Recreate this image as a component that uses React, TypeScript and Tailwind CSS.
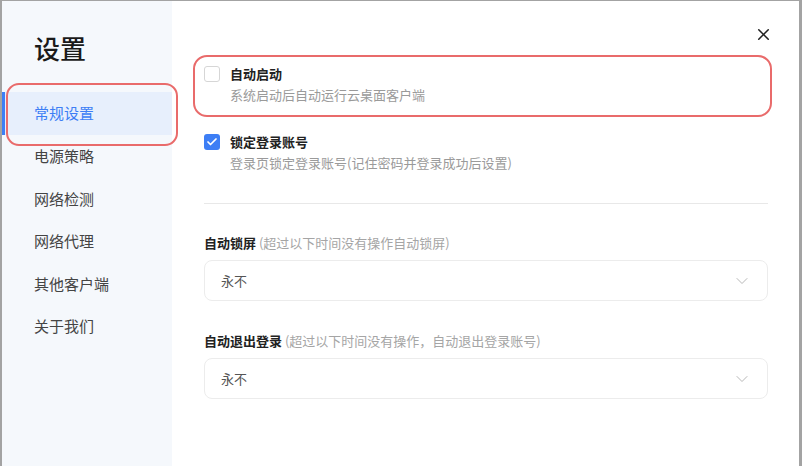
import { X, ChevronDown, Check } from 'lucide-react'

const menu = ['常规设置', '电源策略', '网络检测', '网络代理', '其他客户端', '关于我们']

function Select({ value }: { value: string }) {
  return (
    <div className="mt-[7px] flex h-[41px] items-center justify-between rounded-lg border border-[#ececec] bg-white pl-4 pr-[15px]">
      <span className="text-[13px] text-[#555]">{value}</span>
      <ChevronDown className="h-5 w-5 text-[#b0b0b0]" strokeWidth={1.1} />
    </div>
  )
}

export default function App() {
  return (
    <div
      className="flex h-[466px] w-[802px] border-l-2 border-r-[3px] border-t border-[#a3a3a3] bg-white"
      style={{ fontFamily: '"Noto Sans CJK SC", "Noto Sans", sans-serif' }}
    >
      {/* sidebar */}
      <aside className="w-[170px] shrink-0 bg-[#f5f8fc] pt-[29px]">
        <h1 className="pl-8 text-[26px] font-medium leading-[36px] text-[#1a1a1a]">设置</h1>
        <ul className="mt-[26px]">
          {menu.map((m, i) => (
            <li
              key={m}
              className={
                i === 0
                  ? 'relative flex h-[43px] items-center border-l-[3px] border-[#3d7ef5] bg-[#e7effc] pl-[29px] text-[15px] text-[#3d7ef5]'
                  : 'flex h-[42.5px] items-center pl-8 text-[15px] text-[#444]'
              }
            >
              {m}
              {i === 0 && (
                <span className="pointer-events-none absolute -bottom-[11px] -right-[6px] -top-[9px] left-[1px] rounded-[13px] border-2 border-[#e96b6b]" />
              )}
            </li>
          ))}
        </ul>
      </aside>

      {/* content */}
      <main className="relative flex-1 pl-8 pr-[31px] pt-[63px]">
        <button className="absolute right-[26px] top-[24px] text-[#222]">
          <X className="h-[19px] w-[19px]" strokeWidth={2} />
        </button>

        <div className="relative flex gap-[10px]">
          <span className="mt-[2px] h-4 w-4 shrink-0 rounded-[3px] border border-[#d6d6d6] bg-white" />
          <div>
            <p className="text-[13px] font-semibold leading-5 text-[#222]">自动启动</p>
            <p className="mt-[1px] text-[13px] leading-5 text-[#9a9a9a]">系统启动后自动运行云桌面客户端</p>
          </div>
          <span className="pointer-events-none absolute -left-[11px] -right-[4px] -top-[9px] -bottom-[12px] rounded-[14px] border-2 border-[#e96b6b]" />
        </div>

        <div className="mt-[27px] flex gap-[10px]">
          <span className="mt-[2px] flex h-4 w-4 shrink-0 items-center justify-center rounded-[3px] bg-[#3d7ef5]">
            <Check className="h-3 w-3 text-white" strokeWidth={3.5} />
          </span>
          <div>
            <p className="text-[13px] font-semibold leading-5 text-[#222]">锁定登录账号</p>
            <p className="mt-[1px] text-[13px] leading-5 text-[#9a9a9a]">登录页锁定登录账号(记住密码并登录成功后设置)</p>
          </div>
        </div>

        <div className="mt-[30px] h-px bg-[#e8e8e8]" />

        <p className="mt-[29px] text-[13px] leading-5">
          <span className="font-semibold text-[#222]">自动锁屏</span>
          <span className="text-[#a5a5a5]"> (超过以下时间没有操作自动锁屏)</span>
        </p>
        <Select value="永不" />

        <p className="mt-[30px] text-[13px] leading-5">
          <span className="font-semibold text-[#222]">自动退出登录</span>
          <span className="text-[#a5a5a5]"> (超过以下时间没有操作，自动退出登录账号)</span>
        </p>
        <Select value="永不" />
      </main>
    </div>
  )
}
